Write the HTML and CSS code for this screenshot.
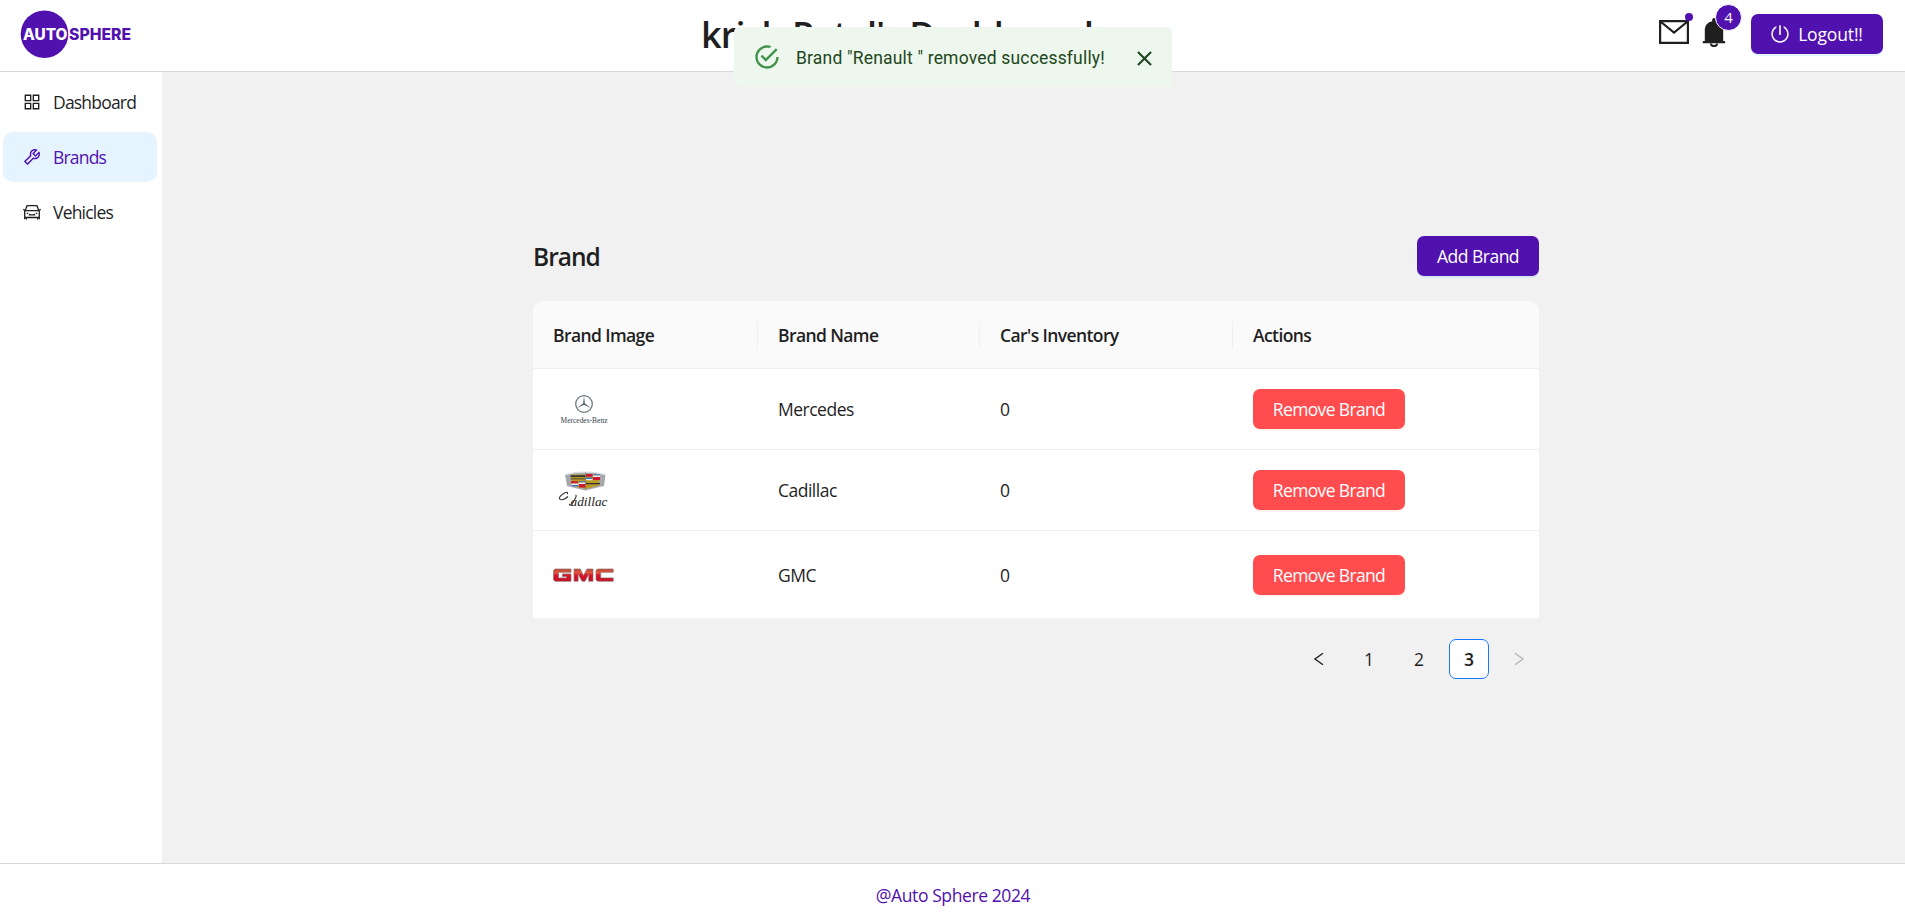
FILE: index.html
```html
<!DOCTYPE html>
<html lang="en">
<head>
<meta charset="utf-8">
<title>Auto Sphere</title>
<link rel="stylesheet" href="styles.css">
</head>
<body>
<div class="app">
  <header class="header">
    <svg class="logo" width="120" height="56" viewBox="0 0 120 56">
      <circle cx="29.5" cy="28.2" r="23.8" fill="#5111af"/>
      <text class="logo-text" x="8" y="34" fill="#fff" textLength="44.500" lengthAdjust="spacingAndGlyphs">AUTO</text>
      <text class="logo-text" x="54" y="34" fill="#5111af" textLength="62" lengthAdjust="spacingAndGlyphs">SPHERE</text>
    </svg>
    <h1 class="title">krish Patel's Dashboard</h1>
    <div class="actions">
      <span class="notify mail">
        <svg width="30" height="24" viewBox="0 0 30 24" fill="none" stroke="#1f1f1f" stroke-width="2.2"><path d="M1.1 1.1h27.8v21.8H1.1zM2 2l13 10.5L28 2"/></svg>
        <i class="dot"></i>
      </span>
      <span class="notify bell">
        <svg width="24" height="30" viewBox="0 0 24 30" fill="#1f1f1f"><path d="M12 1c1 0 1.8.8 1.8 2v1.2c4.600.8 7.400 4.400 7.400 8.800v11h1.300a.7.7 0 0 1 .7.7v1.600H.8v-1.600a.7.7 0 0 1 .7-.7h1.300V13c0-4.400 2.800-8 7.400-8.800V3c0-1.200.8-2 1.800-2z"/><path d="M9 26.500a3 2.600 0 0 0 6 0" fill="none" stroke="#1f1f1f" stroke-width="2"/></svg>
        <b class="count">4</b>
      </span>
      <button class="btn logout">
        <svg width="18" height="18" viewBox="64 64 896 896" fill="currentColor"><path d="M705.6 124.9a8 8 0 00-11.6 7.2v64.2c0 5.500 2.900 10.600 7.500 13.600a352.200 352.200 0 0162.200 49.800c32.700 32.800 58.400 70.900 76.300 113.300a355 355 0 0127.900 138.700c0 48.100-9.400 94.800-27.900 138.700a355.920 355.920 0 01-76.300 113.300 353.060 353.060 0 01-113.200 76.400c-43.800 18.600-90.500 28-138.500 28s-94.700-9.400-138.500-28a353.060 353.060 0 01-113.200-76.400A355.920 355.920 0 01184 650.400a355 355 0 01-27.900-138.700c0-48.100 9.400-94.800 27.900-138.700 17.900-42.400 43.600-80.500 76.300-113.300 19-19 39.800-35.600 62.200-49.800 4.700-2.900 7.500-8.100 7.500-13.600V132c0-6-6.300-9.800-11.600-7.200C178.500 195.200 82 339.300 80 506.300 77.200 745.100 272.500 943.500 511.200 944c239 .5 432.800-193.300 432.800-432.400 0-169.200-97-315.700-238.400-386.700zM480 560h64c4.400 0 8-3.600 8-8V88c0-4.400-3.600-8-8-8h-64c-4.400 0-8 3.600-8 8v464c0 4.400 3.600 8 8 8z"/></svg>
        <span>Logout!!</span>
      </button>
    </div>
  </header>

  <div class="body">
    <nav class="sidebar">
      <a class="nav-item">
        <svg width="18" height="18" viewBox="64 64 896 896" fill="currentColor"><path fill-rule="evenodd" d="M144 144h336v336H144zM212 212v200h200V212zM544 144h336v336H544zM612 212v200h200V212zM144 544h336v336H144zM212 612v200h200V612zM544 544h336v336H544zM612 612v200h200V612z"/></svg>
        <span>Dashboard</span>
      </a>
      <a class="nav-item selected">
        <svg width="18" height="18" viewBox="64 64 896 896" fill="currentColor"><path d="M876.6 239.5c-.5-.9-1.200-1.800-2-2.500-5-5-13.100-5-18.100 0L684.200 409.300l-67.900-67.900L788.700 169c.8-.8 1.400-1.600 2-2.500 3.600-6.100 1.600-13.900-4.500-17.500-98.200-58-226.800-44.700-311.300 39.700-67 67-89.200 162-66.500 247.400l-293 293c-3 3-2.800 7.900.3 11l169.700 169.700c3.100 3.100 8.100 3.300 11 .3l292.900-292.900c85.500 22.800 180.500.7 247.600-66.400 84.400-84.500 97.700-213.100 39.700-311.300zM786 499.800c-58.100 58.100-145.300 69.300-214.600 33.600l-8.800 8.800-.1-.1-274 274.100-79.200-79.200 230.100-230.100s0 .1.1.1l52.800-52.800c-35.700-69.300-24.500-156.500 33.600-214.600a184.200 184.200 0 01144-53.500L537 318.900a32.050 32.050 0 000 45.300l124.500 124.500a32.050 32.050 0 0045.300 0l132.800-132.800c3.700 51.800-14.400 104.800-53.600 143.900z"/></svg>
        <span>Brands</span>
      </a>
      <a class="nav-item">
        <svg width="18" height="18" viewBox="0 0 18 18" fill="none" stroke="currentColor" stroke-width="1.300"><path d="M2.200 7.600L4 2.700h10l1.800 4.900M.3 6.300l1.900 1.300h13.600l1.900-1.300M1.700 16.300V8.600l.9-1h12.800l.9 1v7.700M1.700 14.500h14.600M3.400 14.500v2M14.600 14.500v2"/><path d="M6.500 10.800v1h5v-1M3.700 10.300h1.500M12.800 10.300h1.500"/></svg>
        <span>Vehicles</span>
      </a>
    </nav>

    <main class="content">
      <section class="panel">
        <div class="panel-head">
          <h2 class="panel-title">Brand</h2>
          <button class="btn add">Add Brand</button>
        </div>
        <div class="table">
          <div class="row head">
            <div class="cell">Brand Image</div><div class="cell">Brand Name</div><div class="cell">Car's Inventory</div><div class="cell">Actions</div>
          </div>
          <div class="row">
            <div class="cell">
              <svg width="62" height="40" viewBox="0 0 62 40">
                <circle cx="31" cy="15" r="8.300" fill="#fff" stroke="#68777f" stroke-width="1.300"/>
                <path d="M31 6.800l.8 7.600 6.600 4.800-7.400-3.400-7.400 3.400 6.600-4.800z" fill="#44545e"/>
                <text class="benz" x="7.500" y="33.500" textLength="47" lengthAdjust="spacingAndGlyphs">Mercedes-Benz</text>
              </svg>
            </div>
            <div class="cell">Mercedes</div><div class="cell">0</div>
            <div class="cell"><button class="btn remove">Remove Brand</button></div>
          </div>
          <div class="row">
            <div class="cell">
              <svg width="62" height="40" viewBox="0 0 62 40">
                <path d="M12 4.500Q32-.5 52.500 4.500L51 16Q42 18 32.500 20.500 22 18 14 16z" fill="#a5a9ad"/>
                <path d="M12.500 4.500Q32-.3 52 4.500" fill="none" stroke="#dcdfe1" stroke-width="1.400"/>
                <path d="M18 4.500h29l-1 11-13.500 3.500L19 15.500z" fill="#b99a26"/>
                <path d="M17.500 5.300h15v1.600h-15zM17.500 8.500h15v.8h-15zM33 13h14v1.200H33z" fill="#333"/>
                <path d="M33 4h6.500v2.800H33zM40 7h7v3h-7zM18 11.300h7v2.200h-7zM26 14h6.500v3.500H26z" fill="#cf1730"/>
                <path d="M40 4.300h7v1.200h-7zM33 7.500h6.500V9H33zM26 11.300h6.500v1.200H26zM19 15h6.500v1.200H19z" fill="#3975bd"/>
                <path d="M40 5.500h7V7h-7zM33 9h6.500v1.300H33zM26 12.500h6.500V14H26zM18.500 13.500h7V15h-7z" fill="#e9edf2"/>
                <path d="M32.500 2.500v17" stroke="#777" stroke-width=".7"/>
                <text class="cadillac" x="17.500" y="35.500" textLength="37" lengthAdjust="spacingAndGlyphs">adillac</text>
                <path d="M14 24c1.500-1.500 0-2.300-2-1.300-4 2-6.500 4.800-5.300 6.300s5.300.5 8.300-2.500M22.500 25c2 .5-1 5-3.500 9-1.500 2-3.500 1-2 0" fill="none" stroke="#333" stroke-width="1.100"/>
              </svg>
            </div>
            <div class="cell">Cadillac</div><div class="cell">0</div>
            <div class="cell"><button class="btn remove">Remove Brand</button></div>
          </div>
          <div class="row tall">
            <div class="cell">
              <svg width="62" height="40" viewBox="0 0 62 40">
                <defs><linearGradient id="red" x1="0" y1="0" x2="0" y2="1"><stop offset="0" stop-color="#c2402f"/><stop offset=".3" stop-color="#e4573e"/><stop offset=".5" stop-color="#d8152a"/><stop offset="1" stop-color="#c80d22"/></linearGradient></defs>
                <g fill="url(#red)" stroke="#8a706e" stroke-width=".7">
                  <path d="M2 14h16v3.300H5.500v5.600h8v-1.400H9.500v-2.600H18v7.400H2L.5 24.700v-9.200z"/>
                  <path d="M21 26.200V14h6.200l3.300 6.500L34 14h6v12.200h-4.300v-7.300l-3.700 7.300h-3l-3.900-7.300v7.300z"/>
                  <path d="M44.500 14h15.700v3.300H47.700v5.600h12.500v3.300H44.500L43 24.700v-9.200z"/>
                </g>
              </svg>
            </div>
            <div class="cell">GMC</div><div class="cell">0</div>
            <div class="cell"><button class="btn remove">Remove Brand</button></div>
          </div>
        </div>
        <div class="pages">
          <span class="page"><svg width="14" height="14" viewBox="0 0 14 14" fill="none" stroke="#1f1f1f" stroke-width="1.400"><path d="M11 1.300L3 7l8 5.700"/></svg></span>
          <span class="page">1</span><span class="page">2</span><span class="page current">3</span>
          <span class="page"><svg width="14" height="14" viewBox="0 0 14 14" fill="none" stroke="#b5b5b5" stroke-width="1.400"><path d="M3 1.300L11 7l-8 5.700"/></svg></span>
        </div>
      </section>
    </main>
  </div>

  <footer class="footer"><span>@Auto Sphere 2024</span></footer>
</div>

<div class="toast">
  <svg width="28" height="28" viewBox="0 0 24 24" fill="#43934a"><path d="M20,12A8,8 0 0,1 12,20A8,8 0 0,1 4,12A8,8 0 0,1 12,4C12.760,4 13.500,4.110 14.200,4.310L15.770,2.740C14.610,2.260 13.340,2 12,2A10,10 0 0,0 2,12A10,10 0 0,0 12,22A10,10 0 0,0 22,12M7.910,10.080L6.500,11.500L11,16L21,6L19.590,4.580L11,13.170L7.910,10.080Z"/></svg>
  <span class="toast-text">Brand "Renault " removed successfully!</span>
  <svg class="close" width="25" height="25" viewBox="0 0 24 24" fill="#1e4620"><path d="M19 6.410L17.590 5 12 10.590 6.410 5 5 6.410 10.590 12 5 17.590 6.410 19 12 13.410 17.590 19 19 17.590 13.410 12z"/></svg>
</div>
</body>
</html>
```
FILE: styles.css
```css
* { box-sizing: border-box; }
body {
  margin: 0;
  background: #fff;
  color: #1f1f1f;
  font: 17.5px/28px "Open Sans", "Noto Sans", sans-serif;
  letter-spacing: -0.5px;
}
.app { display: flex; flex-direction: column; height: 922px; overflow: hidden; }

.header {
  display: flex;
  justify-content: space-between;
  align-items: flex-start;
  height: 72px;
  padding: 0 22px 0 15px;
  border-bottom: 1px solid #d9d9d9;
}
.logo { margin-top: 6px; }
.logo-text { font: 800 15.5px Inter, sans-serif; letter-spacing: 0; }
.title {
  margin: 10px 0 0;
  font-size: 36px;
  line-height: 50px;
  font-weight: 600;
  letter-spacing: -0.8px;
  white-space: nowrap;
}
.actions { display: flex; }
.notify { position: relative; height: 30px; }
.notify svg { display: block; }
.mail { margin: 20px 13px 0 0; }
.bell { margin: 17px 25px 0 0; }
.dot {
  position: absolute; top: -7px; right: -4px;
  width: 8px; height: 8px; border-radius: 50%; background: #5111af;
}
.count {
  position: absolute; top: -13px; left: 13px;
  width: 27px; height: 27px;
  border: 1px solid #fff; border-radius: 50%;
  background: #5111af; color: #fff;
  font-size: 15px; line-height: 25px; font-weight: 400; text-align: center; letter-spacing: 0;
}
.btn {
  display: flex; align-items: center; justify-content: center;
  height: 40px; padding: 0;
  border: 0; border-radius: 7px;
  color: #fff; font: inherit; letter-spacing: -0.5px; white-space: nowrap;
}
.logout { width: 132px; margin-top: 14px; gap: 9px; background: #5111af; letter-spacing: -0.15px; box-shadow: 0 2px 0 rgba(5, 145, 255, .1); }
.add { width: 122px; background: #5111af; box-shadow: 0 2px 0 rgba(5, 145, 255, .1); }
.remove { width: 152px; background: #ff4d4f; letter-spacing: -0.65px; box-shadow: 0 2px 0 rgba(255, 38, 5, .06); }

.body { display: flex; flex: 1; }
.sidebar { display: flex; flex-direction: column; gap: 5px; width: 162px; padding: 5px 5px 0 3px; letter-spacing: -0.8px; }
.nav-item { display: flex; align-items: center; gap: 12px; height: 50px; padding-left: 20px; border-radius: 10px; }
.selected { background: #e6f4ff; color: #5111af; }

.content { display: flex; flex: 1; justify-content: center; padding-top: 164px; background: #f1f1f1; }
.panel { width: 1006px; margin-left: 5px; }
.panel-head { display: flex; justify-content: space-between; height: 65px; }
.panel-title { margin: 0; font-size: 24.5px; line-height: 42px; font-weight: 600; letter-spacing: -1px; }

.table { border-radius: 10px 10px 0 0; background: #fff; overflow: hidden; }
.row {
  display: grid;
  grid-template-columns: 225px 222px 253px 306px;
  align-items: center;
  height: 81px;
  border-bottom: 1px solid #f0f0f0;
}
.head { height: 68px; background: #fafafa; font-weight: 600; letter-spacing: -0.6px; }
.tall { height: 87px; border-bottom: 0; padding-top: 1px; }
.cell { padding-left: 20px; }
.cell svg { display: block; }
.head .cell { border-right: 1px solid #f0f0f0; }
.head .cell:last-child { border-right: 0; }
.benz { font: 8px "Liberation Serif", serif; fill: #34434c; letter-spacing: 0; }
.cadillac { font: italic 12px "Liberation Serif", serif; fill: #222; letter-spacing: 0; }

.pages { display: flex; justify-content: flex-end; gap: 10px; margin-top: 21px; }
.page { display: flex; align-items: center; justify-content: center; width: 40px; height: 40px; letter-spacing: 0; }
.current { border: 1px solid #1677ff; border-radius: 7px; background: #fff; font-weight: 600; }

.footer { display: flex; justify-content: center; height: 59px; padding: 17px 0 0 1px; border-top: 1px solid #d9d9d9; color: #5111af; letter-spacing: -0.4px; }

.toast {
  position: absolute; top: 27px; left: 734px;
  display: flex; align-items: center;
  width: 438px; height: 60px; padding: 0 15px 0 19px;
  border-radius: 5px; background: #edf7ed; color: #1e4620;
}
.toast-text { margin: 2px 0 0 15px; font: 17.5px/28px Roboto, sans-serif; letter-spacing: 0.18px; white-space: nowrap; }
.close { margin-left: auto; margin-top: 2px; }
```
